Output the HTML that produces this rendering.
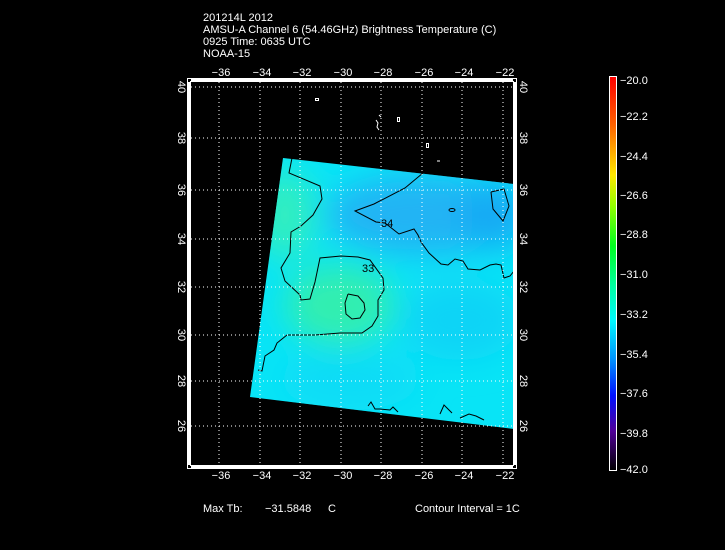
<!DOCTYPE html>
<html><head><meta charset="utf-8"><style>
html,body{margin:0;padding:0;background:#000;}
body{width:725px;height:550px;overflow:hidden;position:relative;font-family:"Liberation Sans",sans-serif;color:#fff;}
svg{position:absolute;left:0;top:0;}
text{font-family:"Liberation Sans",sans-serif;fill:#fff;font-size:11px;}
</style></head><body>
<svg width="725" height="550" viewBox="0 0 725 550">
<defs>
<linearGradient id="cb" x1="0" y1="0" x2="0" y2="1">
<stop offset="0" stop-color="#ff0000"/>
<stop offset="0.12" stop-color="#ff6000"/>
<stop offset="0.25" stop-color="#ffe800"/>
<stop offset="0.33" stop-color="#90ff00"/>
<stop offset="0.43" stop-color="#00ff20"/>
<stop offset="0.53" stop-color="#00ffa0"/>
<stop offset="0.62" stop-color="#00f8ff"/>
<stop offset="0.72" stop-color="#0090ff"/>
<stop offset="0.81" stop-color="#0010ff"/>
<stop offset="0.9" stop-color="#500098"/>
<stop offset="1" stop-color="#000000"/>
</linearGradient>
<filter id="bl"><feGaussianBlur stdDeviation="16"/></filter>
<clipPath id="dc"><polygon points="283,158 514,184 514,429 250,397"/></clipPath>
</defs>
<text x="203" y="21">201214L 2012</text>
<text x="203" y="33">AMSU-A Channel 6 (54.46GHz) Brightness Temperature (C)</text>
<text x="203" y="45">0925 Time: 0635 UTC</text>
<text x="203" y="57">NOAA-15</text>
<g clip-path="url(#dc)">
<rect x="240" y="150" width="280" height="290" fill="#08e4f6"/>
<g filter="url(#bl)">
<ellipse cx="425" cy="215" rx="100" ry="40" fill="#20b4f4"/>
<ellipse cx="495" cy="215" rx="35" ry="35" fill="#18aaf4"/>
<ellipse cx="340" cy="305" rx="55" ry="40" fill="#30eeb0"/>
<ellipse cx="285" cy="215" rx="30" ry="45" fill="#30eec0"/>
<ellipse cx="460" cy="320" rx="60" ry="40" fill="#10d4f6"/>
<ellipse cx="350" cy="380" rx="70" ry="30" fill="#10dcf6"/>
</g>
</g>
<g fill="none" stroke="#000" stroke-width="1">
<polyline points="292,158 289,173 320,186 322,199 313,215 301,226 291,232 290,253 281,268 285,281 300,295 301,300 310,299 315,282 320,258 341,256 358,257 370,260 383,278 384,290 378,300 378,316 372,326 362,333 340,333 315,335 295,335 287,335 282,339 277,343 274,350 265,356 262,371 258,370"/>
<polyline points="423,173 405,188 374,204 355,211 376,222 385,223 399,234 414,229 418,235 421,242 429,253 441,264 448,265 455,259 463,261 468,269 480,270 490,265 496,264 501,265 504,278 510,276 514,271"/>
<polyline points="348,294 345,303 346,314 352,319 360,318 365,310 364,303 358,296 348,294"/>
<polyline points="491,192 504,189 509,206 503,221 493,209 491,192"/>
<ellipse cx="452" cy="210" rx="3" ry="1.5"/>
<polyline points="368,406 371,402 375,409 380,409 390,410 393,407 398,412"/>
<polyline points="440,414 444,405 452,413"/>
<polyline points="460,418 469,414 476,416 484,420"/>
</g>
<text x="381" y="227" font-size="9" style="fill:#000">34</text>
<text x="362" y="272" font-size="9" style="fill:#000">33</text>
<g fill="none" stroke="#fff"><rect x="315.5" y="98.5" width="3" height="2"/><rect x="397.5" y="117.5" width="2" height="4"/><path d="M376 120 l2 3 l-1 4 l2 3 M379 115 l2 2"/><rect x="426.5" y="143.5" width="2" height="4"/><path d="M437 161 h3"/></g>
<g stroke="#fff" stroke-width="1" stroke-dasharray="1,3" fill="none">
<line x1="219" y1="82" x2="219" y2="465"/><line x1="260" y1="82" x2="260" y2="465"/><line x1="300" y1="82" x2="300" y2="465"/><line x1="341" y1="82" x2="341" y2="465"/><line x1="381" y1="82" x2="381" y2="465"/><line x1="422" y1="82" x2="422" y2="465"/><line x1="462" y1="82" x2="462" y2="465"/><line x1="503" y1="82" x2="503" y2="465"/>
<line x1="191" y1="87" x2="513" y2="87"/><line x1="191" y1="138" x2="513" y2="138"/><line x1="191" y1="190" x2="513" y2="190"/><line x1="191" y1="239" x2="513" y2="239"/><line x1="191" y1="287" x2="513" y2="287"/><line x1="191" y1="335" x2="513" y2="335"/><line x1="191" y1="381" x2="513" y2="381"/><line x1="191" y1="426" x2="513" y2="426"/>
</g>
<rect x="187.5" y="78.5" width="329" height="390" fill="none" stroke="#fff"/>
<rect x="190.5" y="81.5" width="323" height="384" fill="none" stroke="#fff"/>
<rect x="191" y="79" width="322" height="2" fill="#fff"/>
<rect x="191" y="466" width="322" height="2" fill="#fff"/>
<rect x="188" y="82" width="2" height="383" fill="#fff"/>
<rect x="514" y="82" width="2" height="383" fill="#fff"/>
<g text-anchor="middle">
<text x="221" y="76">−36</text><text x="262" y="76">−34</text><text x="302" y="76">−32</text><text x="343" y="76">−30</text><text x="383" y="76">−28</text><text x="424" y="76">−26</text><text x="464" y="76">−24</text><text x="505" y="76">−22</text>
<text x="221" y="479">−36</text><text x="262" y="479">−34</text><text x="302" y="479">−32</text><text x="343" y="479">−30</text><text x="383" y="479">−28</text><text x="424" y="479">−26</text><text x="464" y="479">−24</text><text x="505" y="479">−22</text>
</g>
<g font-size="11">
<text transform="translate(178,87) rotate(90)" text-anchor="middle">40</text>
<text transform="translate(178,138) rotate(90)" text-anchor="middle">38</text>
<text transform="translate(178,190) rotate(90)" text-anchor="middle">36</text>
<text transform="translate(178,239) rotate(90)" text-anchor="middle">34</text>
<text transform="translate(178,287) rotate(90)" text-anchor="middle">32</text>
<text transform="translate(178,335) rotate(90)" text-anchor="middle">30</text>
<text transform="translate(178,381) rotate(90)" text-anchor="middle">28</text>
<text transform="translate(178,426) rotate(90)" text-anchor="middle">26</text>
<text transform="translate(520,87) rotate(90)" text-anchor="middle">40</text>
<text transform="translate(520,138) rotate(90)" text-anchor="middle">38</text>
<text transform="translate(520,190) rotate(90)" text-anchor="middle">36</text>
<text transform="translate(520,239) rotate(90)" text-anchor="middle">34</text>
<text transform="translate(520,287) rotate(90)" text-anchor="middle">32</text>
<text transform="translate(520,335) rotate(90)" text-anchor="middle">30</text>
<text transform="translate(520,381) rotate(90)" text-anchor="middle">28</text>
<text transform="translate(520,426) rotate(90)" text-anchor="middle">26</text>
</g>
<rect x="609.5" y="76.5" width="7" height="394" fill="url(#cb)" stroke="#fff"/>
<g font-size="11">
<text x="620" y="84">−20.0</text><text x="620" y="120">−22.2</text><text x="620" y="160">−24.4</text><text x="620" y="199">−26.6</text><text x="620" y="238">−28.8</text><text x="620" y="278">−31.0</text><text x="620" y="318">−33.2</text><text x="620" y="358">−35.4</text><text x="620" y="397">−37.6</text><text x="620" y="437">−39.8</text><text x="620" y="473">−42.0</text>
</g>
<text x="203" y="512">Max Tb:</text>
<text x="265" y="512">−31.5848</text>
<text x="328" y="512">C</text>
<text x="415" y="512">Contour Interval = 1C</text>
</svg>
</body></html>
